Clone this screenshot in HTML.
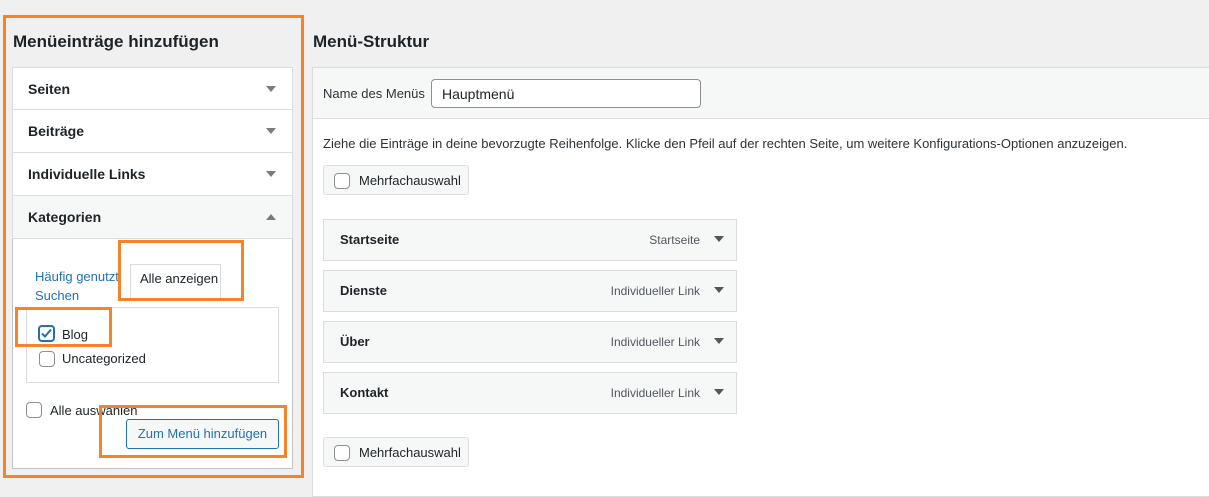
<!DOCTYPE html><html><head><style>
body{margin:0;width:1209px;height:491px;background:#f0f0f1;font-family:"Liberation Sans",sans-serif;color:#1d2327;position:relative;overflow:hidden;font-size:13px}
.a{position:absolute}
.ob{position:absolute;border:3px solid #f5832a;box-sizing:border-box}
h2{position:absolute;margin:0;font-size:17px;font-weight:600}
.sec{position:absolute;left:12px;width:281px;height:43px;box-sizing:border-box;border:1px solid #dcdcde;border-top:none;background:#fff;font-weight:bold;font-size:14px;line-height:42px;padding-left:15px}
.tri{position:absolute;right:16px;top:18px;width:0;height:0;border-left:5px solid transparent;border-right:5px solid transparent;border-top:6px solid #787c82}
.up{border-top:none;border-bottom:6px solid #787c82}
.cb{position:absolute;width:14px;height:14px;border:1px solid #8c8f94;border-radius:4px;background:#fff}
.btn{position:absolute;box-sizing:border-box;border:1px solid #dcdcde;border-radius:3px;background:#f6f7f7;font-size:13px}
.item{position:absolute;left:323px;width:414px;height:42px;box-sizing:border-box;border:1px solid #dcdcde;background:#f6f7f7;font-weight:bold;font-size:13px;line-height:40px;padding-left:16px}
.item span{position:absolute;right:36px;font-weight:normal;color:#50575e;font-size:12px}
.item .tri{right:12px;top:16px;border-top-color:#50575e}
</style></head><body>
<h2 style="left:13px;top:32px">Menüeinträge hinzufügen</h2>
<h2 style="left:313px;top:32px">Menü-Struktur</h2>
<div class="a" style="left:12px;top:67px;width:281px;height:402px;background:#fff;border:1px solid #c3c4c7;box-sizing:border-box"></div>
<div class="sec" style="top:67px;border-top:1px solid #dcdcde">Seiten<div class="tri"></div></div>
<div class="sec" style="top:110px">Beiträge<div class="tri"></div></div>
<div class="sec" style="top:153px">Individuelle Links<div class="tri"></div></div>
<div class="sec" style="top:196px;background:#f6f7f7">Kategorien<div class="tri up"></div></div>
<div class="a" style="left:35px;top:269px;color:#2271b1">Häufig genutzt</div>
<div class="a" style="left:130px;top:264px;width:91px;height:36px;background:#fff;border:1px solid #dcdcde;border-bottom:none;box-sizing:border-box;padding:6px 0 0 9px">Alle anzeigen</div>
<div class="a" style="left:35px;top:288px;color:#2271b1">Suchen</div>
<div class="a" style="left:26px;top:307px;width:253px;height:76px;border:1px solid #dcdcde;box-sizing:border-box;background:#fff"></div>
<div class="cb" style="left:38px;top:325px;border-color:#2271b1;border-width:2px;width:13px;height:13px"><svg width="13" height="13" viewBox="0 0 13 13" style="position:absolute;left:0;top:0"><path d="M2 6.5l3 3 6-7" stroke="#2271b1" stroke-width="2" fill="none"/></svg></div>
<div class="a" style="left:62px;top:327px">Blog</div>
<div class="cb" style="left:39px;top:351px"></div>
<div class="a" style="left:62px;top:351px">Uncategorized</div>
<div class="cb" style="left:26px;top:402px"></div>
<div class="a" style="left:50px;top:403px">Alle auswählen</div>
<div class="btn" style="left:126px;top:419px;width:153px;height:30px;border-color:#2271b1;color:#2271b1;line-height:28px;text-align:center">Zum Menü hinzufügen</div>
<div class="ob" style="left:3px;top:15px;width:301px;height:463px"></div>
<div class="ob" style="left:118px;top:240px;width:126px;height:61px"></div>
<div class="ob" style="left:15px;top:307px;width:97px;height:40px"></div>
<div class="ob" style="left:99px;top:405px;width:188px;height:53px"></div>
<div class="a" style="left:312px;top:67px;width:900px;height:430px;background:#fff;border:1px solid #dcdcde;box-sizing:border-box"></div>
<div class="a" style="left:313px;top:68px;width:900px;height:50px;background:#f6f7f7;border-bottom:1px solid #dcdcde"></div>
<div class="a" style="left:323px;top:86px;color:#2c3338">Name des Menüs</div>
<div class="a" style="left:431px;top:79px;width:270px;height:29px;box-sizing:border-box;border:1px solid #8c8f94;border-radius:4px;background:#fff;padding:6px 0 0 10px;font-size:14px">Hauptmenü</div>
<div class="a" style="left:323px;top:136px;color:#2c3338">Ziehe die Einträge in deine bevorzugte Reihenfolge. Klicke den Pfeil auf der rechten Seite, um weitere Konfigurations-Optionen anzuzeigen.</div>
<div class="btn" style="left:323px;top:165px;width:146px;height:30px"><div class="cb" style="left:10px;top:7px"></div><span class="a" style="left:35px;top:7px">Mehrfachauswahl</span></div>
<div class="item" style="top:219px">Startseite<span>Startseite</span><div class="tri"></div></div>
<div class="item" style="top:270px">Dienste<span>Individueller Link</span><div class="tri"></div></div>
<div class="item" style="top:321px">Über<span>Individueller Link</span><div class="tri"></div></div>
<div class="item" style="top:372px">Kontakt<span>Individueller Link</span><div class="tri"></div></div>
<div class="btn" style="left:323px;top:437px;width:146px;height:30px"><div class="cb" style="left:10px;top:7px"></div><span class="a" style="left:35px;top:7px">Mehrfachauswahl</span></div>
</body></html>
